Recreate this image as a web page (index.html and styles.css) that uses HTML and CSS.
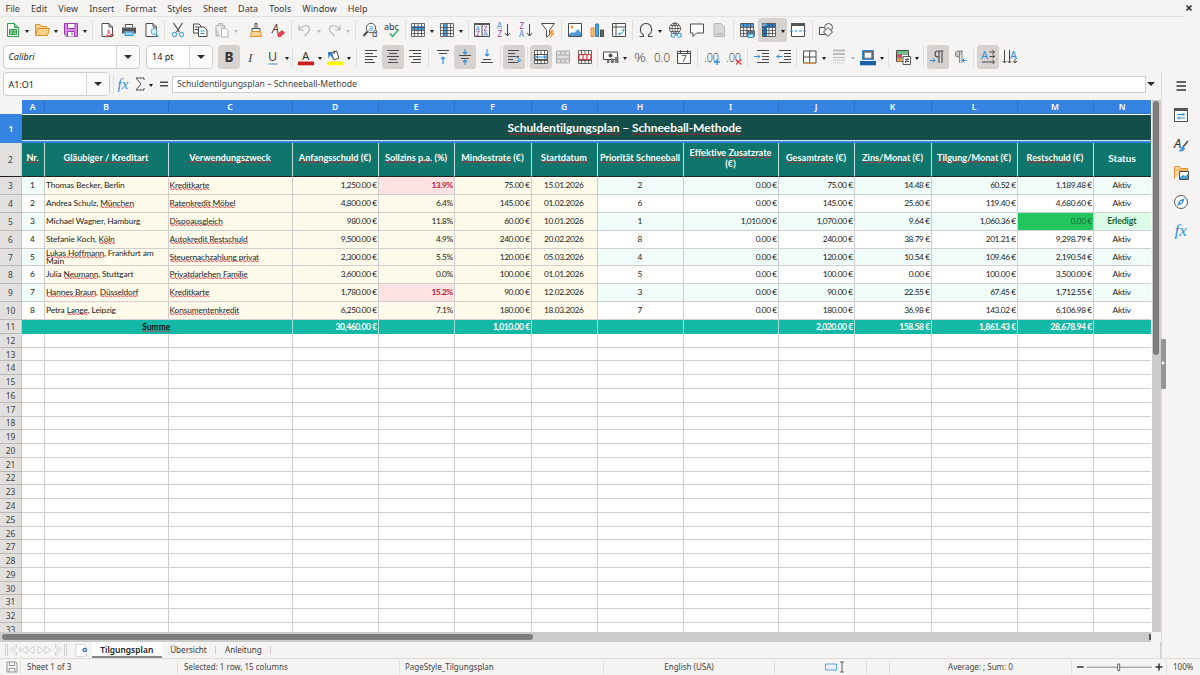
FILE: index.html
```html
<!DOCTYPE html>
<html lang="de">
<head>
<meta charset="utf-8">
<title>Schuldentilgungsplan</title>
<link rel="stylesheet" href="styles.css">
</head>
<body>
<div class="app">
  <nav class="menubar">
    <span>File</span><span>Edit</span><span>View</span><span>Insert</span><span>Format</span><span>Styles</span><span>Sheet</span><span>Data</span><span>Tools</span><span>Window</span><span>Help</span>
    <svg class="close" viewBox="0 0 8 8"><path d="M1.5 1.5l5 5M6.5 1.5l-5 5" stroke="#2e2e2e" stroke-width="1.7"/></svg>
  </nav>
  <div class="toolbar standard" id="standard"></div>
  <div class="toolbar formatting">
    <div class="combo font"><i>Calibri</i><b></b></div>
    <div class="combo size"><span>14 pt</span><b></b></div>
    <div class="toolbar" id="formatting"></div>
  </div>
  <div class="lower">
    <main class="main">
      <div class="formulabar">
        <div class="combo name"><span>A1:O1</span><b></b></div>
        <div class="toolbar" id="formula"></div>
        <div class="input">Schuldentilgungsplan – Schneeball-Methode</div>
        <b class="drop"></b>
      </div>
      <div class="work">
        <div class="sheet" id="sheet"></div>
        <div class="vscroll"><div class="vthumb"></div></div>
      </div>
      <div class="hscroll"><div class="hthumb"></div><div class="hend"></div></div>
      <div class="tabs">
        <svg class="nav" viewBox="0 0 62 12"><g fill="#f8f8f7" stroke="#c6c5c3" stroke-width=".8"><path d="M.5.5h2v11h-2zM59.500 .5h2v11h-2zM11.500 .5l-6 5.500 6 5.500V8.500L8.500 6l3-2.500zM50.500 .5l6 5.500-6 5.500V8.500L53.500 6l-3-2.500z"/><path d="M22 2.500L16 6l6 3.500zM29 2.500L23 6l6 3.500zM33 2.500L39 6l-6 3.500zM40 2.500L46 6l-6 3.500zM15 3v6"/></g></svg>
        <svg class="addtab" viewBox="0 0 14 14"><path d="M1 .5h8l3 3v10H1z" fill="#fff" stroke="#c8c6c4" stroke-width=".7"/><circle cx="10.500" cy="6.500" r="2.500" fill="#2d62ad"/><path d="M10.500 5v3M9 6.500h3" stroke="#fff" stroke-width=".8"/></svg>
        <span class="tab on">Tilgungsplan</span><span class="tab">Übersicht</span><span class="tab">Anleitung</span>
      </div>
    </main>
    <aside class="sidebar">
      <div id="side"></div>
      <div class="handle"></div>
    </aside>
  </div>
  <footer class="status">
    <span class="s-save"><svg viewBox="0 0 12 12"><g fill="none" stroke="#8a8a88" stroke-width=".9"><path d="M1 1h9l1 1v9H1zM3.500 1v3.500h5V1M3 11V7.500h6V11"/></g></svg></span>
    <span class="s-sheet">Sheet 1 of 3</span>
    <span class="s-sel">Selected: 1 row, 15 columns</span>
    <span class="s-page">PageStyle_Tilgungsplan</span>
    <span class="s-lang">English (USA)</span>
    <span class="s-mode"><svg viewBox="0 0 20 12"><path d="M1.500 3h11v6h-11z" fill="#eaf3fb" stroke="#4a9ad4" stroke-width=".9"/><path d="M16 1h4M18 1v10M16 11h4" stroke="#555" stroke-width=".9"/></svg></span>
    <span class="s-sig"></span>
    <span class="s-sum">Average: ; Sum: 0</span>
    <span class="s-zoom"><svg viewBox="0 0 86 12"><path d="M0 6h6.500M78.500 6h7M82 2.500v7" stroke="#333" stroke-width="1.500"/><path d="M10 6.200h65" stroke="#8b8b8a"/><path d="M40.700 3h2v6.500h-2z" fill="#fff" stroke="#555" stroke-width=".9"/></svg></span>
    <span class="s-pct">100%</span>
  </footer>
</div>
<script src="app.js"></script>
</body>
</html>
```
FILE: styles.css
```css
* { box-sizing: border-box; }
body { margin: 0; font-family: "Noto Sans", sans-serif; color: #3a3a3a; background: #f5f4f3; overflow: hidden; }
.app { width: 1200px; height: 675px; display: flex; flex-direction: column; overflow: hidden; }
svg { display: block; }

.menubar { height: 17px; display: flex; gap: 11.100px; padding-left: 5.500px; font-size: 9.050px; line-height: 17px; margin-right: 16px; border-bottom: 1px solid #e4e2e0; flex: none; }
.close { width: 8px; height: 8px; margin: 4px -9px 0 auto; }

.toolbar { display: flex; align-items: center; flex: none; }
.standard { height: 27px; padding: 0 0 1px 2px; }
.formatting { height: 27px; padding: 0 0 2px 2.500px; }
.btn { height: 24px; display: flex; align-items: center; border-radius: 3px; }
.btn.on { background: #d5d2cf; }
.btn svg { width: 16px; height: 16px; margin: 0 3px; overflow: visible; }
.arr { width: 7px; height: 24px; display: flex; align-items: center; }
.arr::after { content: ""; border: 2.500px solid transparent; border-top: 3px solid #1c1c1c; border-bottom: 0; margin: 3px 0 0 1px; }
.arr.off::after { border-top-color: #bbb; }
.sep { height: 20px; display: flex; justify-content: center; }
.sep::after { content: ""; width: 1px; background: #e2e0de; }
.gap::after { display: none; }
#formula .btn svg { margin: 0; }

.combo { height: 24px; border: 1px solid #cfccc9; border-radius: 4px; background: #fff; display: flex; align-items: center; justify-content: space-between; font-size: 9px; padding-left: 5px; color: #222; flex: none; }
.combo b { width: 23px; height: 22px; border-left: 1px solid #d8d5d2; background: #fafafa; border-radius: 0 3px 3px 0; display: flex; align-items: center; justify-content: center; }
.combo b::after, .drop::after { content: ""; border: 4px solid transparent; border-top: 4.500px solid #2e2e2e; border-bottom: 0; }
.font { width: 137px; }
.size { width: 66.500px; margin: 0 5px 0 6.500px; }
.name { width: 107.500px; margin-left: 2.500px; }

.lower { flex: 1; display: flex; min-height: 0; }
.main { width: 1161px; display: flex; flex-direction: column; }
.formulabar { height: 29px; display: flex; align-items: center; padding-bottom: 3px; flex: none; }
.input { width: 973.500px; height: 17px; background: #fff; border: 1px solid #d0cecc; font-size: 8.650px; line-height: 15px; padding-left: 4px; color: #444; flex: none; }
.drop { margin-left: 1.500px; display: flex; }
.work { display: flex; height: 532px; flex: none; }
.sheet { width: 1151px; overflow: hidden; background: #fff; flex: none; }
.vscroll { flex: 1; background: #cdcdcc; border-left: 1px solid #fff; padding: 1px 2px 1px 1px; }
.vthumb { width: 6px; height: 254px; border-radius: 3px; background: #7d7d7c; }
.hscroll { height: 10px; width: 1151px; background: #cbcbca; padding: 2px 0 0 2px; display: flex; justify-content: space-between; flex: none; }
.hthumb { width: 531px; height: 6px; border-radius: 3px; background: #7d7d7c; }
.hend { width: 2px; height: 6px; background: #555; }

.row { display: grid; grid-template-columns: 22px 23px 124px 124px 86px 76px 77px 66px 86px 95px 76px 77px 86px 76px 58px; }
.cell { border-right: 1px solid #cfcfcf; border-bottom: 1px solid #cfcfcf; display: flex; align-items: center; font-family: Lato, sans-serif; font-size: 8.350px; line-height: 8px; letter-spacing: -.13px; color: #1c1c1c; white-space: nowrap; overflow: hidden; padding: 0 1px 1px .5px; }
.num { justify-content: flex-end; letter-spacing: -.38px; padding-right: 1.200px; }
.mid { justify-content: center; text-align: center; padding-right: 2px; }
.date { letter-spacing: -.32px; }
.wrap { white-space: normal; padding-left: 1px; }
.head { background: #e2e0df; border-right: 1px solid #c9c7c5; border-bottom: 1px solid #bcbab8; display: flex; align-items: center; justify-content: center; font-size: 8.500px; color: #444; }
.cols { height: 14px; }
.cols .head { background: #3584e4; color: #fff; font-weight: 600; font-size: 8.500px; border-color: #2f73c9; padding-right: 1px; }
.cols .corner { background: #f5f4f3; border: 0; }
.title { height: 29px; grid-template-columns: 22px 1129px; }
.title .head { background: #3584e4; color: #fff; font-weight: 600; border: 0; }
.title .cell { background: #134e4a; color: #fff; font: 700 12.050px Lato, sans-serif; letter-spacing: -.1px; justify-content: center; padding: 0 0 2px 76px; margin-top: 1px; border: 0; border-bottom: 2px solid #3584e4; box-shadow: inset 0 -1px #dfeaf5; }
.labels { height: 34px; }
.labels > * { border-bottom: 1px solid #222; }
.labels .cell { background: #0f766e; color: #fff; font-weight: 700; font-size: 9.150px; line-height: 10.500px; letter-spacing: .02px; border-right-color: #c5dedb; padding: 0 1px 2px 0; }
.labels .cell:last-child { font-size: 9.900px; }
.data { height: 17.900px; }
.odd .cell { background: #f0fdfa; }
.data .in { background: #fffbeb; }
.data .warn { background: #fee2e2; color: #b91c3c; font-weight: 700; }
.data .paid { background: #22c55e; color: #166534; }
.data .done { background: #dcfce7; color: #166534; font-weight: 700; font-size: 8.800px; }
.total { height: 13.800px; grid-template-columns: 22px 271px 86px 76px 77px 66px 86px 95px 76px 77px 86px 76px 58px; }
.total .cell { background: #14b8a6; color: #fff; font-weight: 700; font-size: 8.500px; border-color: #9fe0d8; border-bottom: 0; }
.total .mid { color: #111; letter-spacing: 0; }
.empty { height: 13.770px; }
.sp { background: url("data:image/svg+xml,%3Csvg xmlns='http://www.w3.org/2000/svg' width='4' height='2'%3E%3Cpath d='M0 1.600L1 .5L3 1.600L4 .9' fill='none' stroke='%23e01b24' stroke-width='.8'/%3E%3C/svg%3E") 0 100% / 4px 2px repeat-x; }

.tabs { flex: 1; display: flex; align-items: center; border-bottom: 1px solid #d0cecc; border-right: 1px solid #d0cecc; font-size: 8.100px; }
.nav { width: 62px; height: 12px; margin-left: 5px; }
.addtab { width: 13px; height: 13px; margin: 0 4.500px 0 7.500px; }
.tab { height: 16px; line-height: 15px; padding: 0 9.500px 0 8.700px; position: relative; }
.tab.on { width: 69.500px; padding: 0; text-align: center; background: #fff; font-weight: 600; color: #222; border-bottom: 2px solid #888; font-size: 8.450px; }
.tab:not(.on)::after { content: ""; position: absolute; right: 0; top: 4px; height: 8px; border-right: 1px solid #d0cecc; }

.sidebar { flex: 1; position: relative; border-left: 1px solid #dcdad8; }
#side { display: flex; flex-direction: column; align-items: center; gap: 13.100px; padding: 7px 0 0; }
#side svg { width: 16px; height: 16px; }
.handle { position: absolute; left: -1px; top: 268px; width: 5px; height: 50px; background: #949493; }
.handle::after { content: ""; position: absolute; left: 1px; top: 22px; border: 2.500px solid transparent; border-left: 3px solid #fff; border-right: 0; }

.status { height: 17px; flex: none; display: flex; align-items: center; font-size: 8px; color: #444; border-top: 1px solid #dddbd9; }
.status span { height: 14px; line-height: 13px; border-right: 1px solid #e1dfdd; }
.s-save { width: 21px; padding: 1px 0 0 6px; }
.s-save svg { width: 12px; height: 12px; }
.s-sheet { width: 157px; padding-left: 6px; }
.s-sel { width: 222px; padding-left: 6px; }
.s-page { width: 204px; padding-left: 5px; }
.s-lang { width: 171px; text-align: center; }
.s-mode { width: 92px; padding: 1px 0 0 49px; }
.s-mode svg { width: 20px; height: 12px; }
.s-sig { width: 23px; }
.s-sum { width: 182px; text-align: center; }
.s-zoom { width: 95px; padding: 1px 0 0 5px; }
.s-zoom svg { width: 86px; height: 12px; }
.status .s-pct { padding-left: 6px; border: 0; }
```
FILE: app.js
```js
const K = '#4a4a4a', B = '#2f8fd8', G = '#bcbab8';
const p = (d, stroke = K, fill = 'none', w = 1) => `<path d="${d}" stroke="${stroke}" fill="${fill}" stroke-width="${w}"/>`;
const t = (s, x, y, size, color = K, extra = '') => `<text x="${x}" y="${y}" font-size="${size}" fill="${color}" ${extra}>${s}</text>`;
const page = p('M3 1.500h7l3.500 3.500v9.500H3zM10 1.500V5h3.500', K, '#fff');
const grid = p('M1.500 1.500h13v13h-13zM1.500 5.500h13M1.500 8.500h13M1.500 11.500h13M4.500 1.500v13M8 1.500v13M11.500 1.500v13', K, 'none', .8);
const lines = (a, c = K) => a.map(([x1, x2, y]) => p(`M${x1} ${y}H${x2}`, c)).join('');
const pilcrow = 'M12 14V2.500M9 14V2.500M13.500 2H8a3 3 0 0 0 0 6h1';

const icons = {
  fresh: p('M2.500 1.500h7l4 4v9h-11z', '#2f9e4f', '#fff') + p('M9.500 1.500v4h4', '#2f9e4f', '#8fd19e') + p('M4.500 7.500h7v5h-7zM4.500 10h7M8 7.500v5', '#2f9e4f', '#9bd8a8'),
  open: p('M1.500 13V2.500h4.500l1.500 2h5V7', '#e08b2c', '#fbd28e') + p('M1.500 13.500l2-7H15.500l-2 7z', '#e08b2c', '#fbcf86'),
  save: p('M1.500 1.500h13v13h-11l-2-2z', '#9c3bb0', '#d48be0') + p('M4.500 1.500h7.500v5H4.500z', '#9c3bb0', '#fff') + p('M4.500 14.500v-5h7v5M9 10.500v3', '#9c3bb0', '#fff'),
  pdf: page + p('M6 15c3-2 5-6 3.500-7-1.500 0 0 4 5.500 5.500-2-1-5 0-9 1.500z', '#e0434f', 'none'),
  print: p('M4.500 5V2.500h7V5', K, '#fff') + '<path d="M1 5.500h14v6h-2.500v-2h-9v2H1z" fill="#555"/>' + p('M4 10h8v3.500H4z', B, '#a9d3f2'),
  preview: page + '<circle cx="11" cy="9.500" r="3" fill="#dceefa" stroke="#4ba3dd"/>' + p('M13 12l2.500 3', '#4ba3dd', 'none', 1.300),
  cut: p('M3.500 1l6 9M12.500 1l-6 9', K, 'none', 1.200) + `<circle cx="4.500" cy="12.500" r="2.200" fill="none" stroke="${B}"/><circle cx="11.500" cy="12.500" r="2.200" fill="none" stroke="${B}"/>`,
  copy: p('M1.500 2h5.500l2 2v7H1.500zM3 5h3M3 7.500h3', K, '#fff') + p('M6.500 5h5.500l3 3v6.500H6.500z', K, '#fff') + p('M8.500 9h4M8.500 11.500h4', B),
  paste: p('M2 3.500h2.500v-2h4v2H11V7M2 3.500V14h4', '#b5b3b1', '#d5d3d1') + p('M7.500 6.500h4l2.500 2.500v6H7.500z', '#b5b3b1', '#fff'),
  clone: p('M7 1.500h2v5H7zM4 6.500h8v3H4z', K, '#fff') + p('M3.500 9.500h9l1 5H2.500z', '#e69138', '#fbd28e'),
  clear: t('A', 2, 11, 12, K, 'font-style="italic"') + '<path d="M7 12l5-4 3 3-4.500 4H8z" fill="#e0434f"/>',
  undo: p('M2 3v5h5M2.500 8c2-5 10-6 10-1 0 3-3 5-5 7', G, 'none', 1.200),
  redo: p('M14 3v5H9M13.500 8c-2-5-10-6-10-1 0 3 3 5 5 7', G, 'none', 1.200),
  find: '<circle cx="9" cy="6" r="4.700" fill="#fff" stroke="#555"/>' + t('a', 6.500, 9, 8, B) + t('d', 10, 15, 9) + p('M5.500 9.500L1.500 14', K, 'none', 2),
  spell: t('abc', 0, 8, 9, '#333') + p('M6 11.500l2.500 3 6-7', '#38b070', 'none', 1.500),
  rows: '<path d="M2 4h12v4H2z" fill="#4ba3e3"/>' + grid,
  cols: '<path d="M4.500 2h4v12h-4z" fill="#4ba3e3"/>' + grid,
  sort: p('M.5 1.500h15v13H.5zM8 1.500v13', K) + '<path d="M0 1h16v2H0z" fill="#555"/>' + t('A', 1.700, 8.700, 6.500, B) + t('Z', 1.900, 14, 6.500, '#a040b8') + t('Z', 9.600, 8.700, 6.500, '#a040b8') + t('A', 9.500, 14, 6.500, B),
  asc: t('A', 1, 7, 8, B) + t('Z', 1.500, 15, 8, '#a040b8') + p('M11.500 2v12M9 11l2.500 3 2.500-3', K),
  desc: t('Z', 1.500, 7, 8, '#a040b8') + t('A', 1, 15, 8, B) + p('M11.500 2v12M9 11l2.500 3 2.500-3', K),
  filter: p('M1.500 1.500h13L9.500 8v5L6.500 15V8z', K, '#fff') + '<path d="M11 8h3l-1.500 3H15l-5 5 1-4H9z" fill="#f39c3c"/>',
  image: p('M1.500 1.500h13v13h-13z', K, '#fff') + '<path d="M2 14v-2l3-2 2 1 4-4 3 4v3z" fill="#4b9cd8"/><circle cx="5" cy="5" r="1.500" fill="#f39c3c"/>',
  chart: p('M2 6h3v8.500H2z', '#e69138', '#f9c06c') + p('M6.500 2h3v12.500h-3z', '#2f7fc4', '#4ba3e3') + p('M11.500 8h3v6.500h-3z', K, '#666'),
  pivot: p('M1.500 1.500h13v13h-13zM1.500 5h13M5 1.500v13', K, '#fff') + p('M7.500 12c4 0 5-2 5-5M11 8.500L12.500 7 14 8.500M9 10.500L7.500 12 9 13.500', B),
  omega: p('M1.500 14.500h4v-1.500C0 9 2.500 1.500 8 1.500S16 9 10.500 13v1.500h4', K, 'none', 1.100),
  link: '<circle cx="8" cy="6.500" r="5.500" fill="#fff" stroke="#555"/>' + p('M2.500 6.500h11M8 1v11M4 3.500h8M4 9.500h8M8 1C4 4 4 9 8 12M8 1c4 3 4 8 0 11', K, 'none', .8) + p('M7 11.500H5.500a1.800 1.800 0 0 0 0 3.500H8M10.500 15H13a1.800 1.800 0 0 0 0-3.500h-2.500M7.500 13.200h3.500', B, '#fff', 1.200),
  comment: p('M1.500 2h13v9H7.500L4 14.500V11H1.500z', K, '#fff'),
  header: p('M3 1.500h7l3.500 3.500v9.500H3z', '#b8b6b4', '#d9d7d5') + p('M5 12h6.500', '#aaa'),
  parea: '<path d="M2 1h12v4H2z" fill="#4b9ad8"/>' + grid + '<path d="M7.500 8.500h8.500v6H7.500z" fill="#5d6e7d"/>' + p('M9 12h5.500v3.500H9z', B, '#bfe0f7'),
  freeze: '<path d="M2 2h12.500v12.500H2z" fill="#fff"/><path d="M1.500 1.500h13v3.500h-8.500v9.500H1.500z" fill="#1e78c8"/>' + grid + p('M3.500 0v4M1 3h5', '#9fd0f5', 'none', .8),
  split: p('M1.500 2.500h13v12h-13z', K, '#fff') + '<path d="M1 1h14v3H1z" fill="#555"/>' + p('M0 9h3M4.500 9h3M9 9h3M13.500 9h2.500', B, 'none', 1.200),
  shapes: p('M1.500 5.500h8v7h-8z', K, '#f5f4f3') + '<circle cx="10.500" cy="5.500" r="4" fill="#f5f4f3" stroke="#555"/>' + p('M10 5.500l4.500 4.500-4.500 4.500L5.500 10z', K, '#f5f4f3'),

  bold: t('B', 3.500, 13, 13.500, '#333', 'font-weight="700"'),
  italic: t('I', 5, 13, 13.500, K, 'font-style="italic" font-family="Liberation Serif"'),
  underline: t('U', 3, 12, 12.500) + p('M3.500 15h9', '#3f8fd8', 'none', 1),
  color: t('A', 4, 10.500, 11.500, '#333') + '<path d="M0 12.500h16v3.800H0z" fill="#c9211e"/>',
  fill: p('M4.500 4l5-2 2.500 7-5 2zM7 5V1.500', K, '#fff') + '<path d="M1 3h4l1 7-3-4-1.500 4z" fill="#2f7fc4"/><path d="M0 12.500h16v3.800H0z" fill="#ffff00"/>',
  left: lines([[2, 14, 1.500], [2, 10, 4.500], [2, 14, 7.500], [2, 10, 10.500], [2, 12, 13.500]]),
  center: lines([[2, 14, 1.500], [4, 12, 4.500], [2, 14, 7.500], [4, 12, 10.500], [3, 13, 13.500]]),
  right: lines([[2, 14, 1.500], [6, 14, 4.500], [2, 14, 7.500], [6, 14, 10.500], [4, 14, 13.500]]),
  top: lines([[2, 14, 1.500], [4, 12, 4.500]]) + p('M8 15V8M6 10l2-2 2 2', B, 'none', 1.100),
  middle: lines([[2, 14, 6.500], [4, 12, 9.500]]) + p('M8 0v4.500M6 3l2 2 2-2M8 16v-4.500M6 13l2-2 2 2', B, 'none', 1.100),
  bottom: lines([[2, 14, 13.500], [4, 12, 10.500]]) + p('M8 0v7M6 5l2 2 2-2', B, 'none', 1.100),
  wrap: lines([[2, 13, 1.500], [2, 9, 4.500], [2, 13, 7.500], [2, 7, 10.500], [2, 12, 13.500]]) + p('M9 7.500c3 0 4 2 4 5M11 11l2 2 2-2', B),
  mergec: '<path d="M2 2h12v12H2z" fill="#fff"/>' + grid + p('M2 5.500h12v5H2z', K, '#fff') + p('M3 8h10M5 6.500L3.500 8 5 9.500M11 6.500L12.500 8 11 9.500', B, 'none', 1.200),
  merge: p('M1.500 2h13v12h-13zM1.500 6h13M1.500 10h13M6 2v4M10 2v4M6 10v4M10 10v4', '#aaa', '#ddd'),
  unmerge: grid + p('M2 5.500h12v5H2zM6 5.500v5M10 5.500v5', '#d9363e', '#fff', 1.200),
  currency: p('M.5 3h14v7.500H.5z', K, '#fff') + '<circle cx="7.500" cy="6.500" r="2" fill="#555"/><path d="M4 11h2.500v3H4zM8 9.500h3V14H8zM12 8h3.500v6H12z" fill="#777"/>',
  percent: t('%', 2, 13, 13, K, 'textLength="12" lengthAdjust="spacingAndGlyphs" font-weight="300"'),
  number: t('0.0', 0, 13, 13.500, K, 'textLength="16" lengthAdjust="spacingAndGlyphs" font-weight="300"'),
  date: p('M1.500 2.500h13v12h-13zM1.500 4.500h13M4.500 1v3M11.500 1v3', K, '#fff') + t('7', 5.500, 13, 9),
  adddec: t('.00', 0, 13, 13, K, 'textLength="15" lengthAdjust="spacingAndGlyphs" font-weight="300"') + p('M13 10v6M10 13h6', B, 'none', 1.300),
  deldec: t('.00', 0, 13, 13, K, 'textLength="15" lengthAdjust="spacingAndGlyphs" font-weight="300"') + p('M10 10.500l5.500 5M15.500 10.500l-5.500 5', '#e0434f', 'none', 1.300),
  indent: lines([[3, 15, 1.500], [8, 15, 4.500], [8, 15, 7.500], [8, 15, 10.500], [3, 15, 13.500]]) + p('M0 7.500h6M4 5.500l2 2-2 2', B),
  outdent: lines([[3, 15, 1.500], [8, 15, 4.500], [8, 15, 7.500], [8, 15, 10.500], [3, 15, 13.500]]) + p('M6.500 7.500h-6M3 5.500l-2 2 2 2', B),
  borders: p('M1.500 2h12.500v12H1.500zM7.700 2v12M1.500 8H14', K, '#fff') + p('M1.500 14.200H14', '#e69138'),
  bstyle: p('M2 1.500h12M2 5h12', '#bbb', 'none', 2) + p('M2 8.500h12', '#bbb', 'none', 1) + p('M2 11h3M6 11h3M10 11h4M2 14h1M4 14h1M6 14h1M8 14h1M10 14h1M12 14h1', '#bbb'),
  bcolor: p('M2.500 1.500h11v9h-11z', B, '#5a6670') + p('M4.500 3.500h7v5.500h-7z', '#999', '#fff') + '<path d="M0 12h16v4.300H0z" fill="#1b5fa5"/>',
  cond: p('M1.500 1.500h12v11h-12zM1.500 5h12M1.500 9h12M5 1.500v11', K, '#fff') + '<path d="M2 2h11v3H2z" fill="#69c488"/><path d="M2 5.500h5v3H2z" fill="#e0434f"/><path d="M2 9.500h5v3H2z" fill="#f39c3c"/>' + p('M8 7.500h7.500V15.500H8zM10 10.500h4M10 12.500h4M13 9l-2.500 5', K, '#fff', .9),
  ltr: p(pilcrow, K, 'none', 1.100) + p('M0 11.500h5M3 9.500l2 2-2 2', B),
  rtl: p('M10 14V2.500M7.500 14V2.500M11 2H6.500a3 3 0 0 0 0 6h1', '#888', '#ccc', 1.100) + p('M15 11.500h-4.500M12.500 9.500l-2 2 2 2', B),
  horiz: t('A', 1, 9.500, 11, B) + p('M9.500 3h5M9.500 7.500h5M2 13h12.500M12.500 1l2 2-2 2M12.500 5.500l2 2-2 2M12.500 11l2 2-2 2', K),
  vert: t('A', 8, 9.500, 11, B) + p('M2.500 1v13M7.500 1v13M13 9.500V14M.5 12l2 2 2-2M5.500 12l2 2 2-2M11 12l2 2 2-2', K),

  fx: t('fx', 1.500, 13, 15, B, 'font-style="italic" font-family="Liberation Serif"'),
  sigma: p('M12 4V2H4l5 6-5 6h8v-2', K),
  equal: p('M4 6.200h8M4 9.800h8', K, 'none', 1.600),
  burger: p('M3.500 4h9.500M3.500 8h9.500M3.500 12h9.500', '#333', 'none', 1.500),
  props: p('M1.500 1.500h13v13h-13z', K, '#fff') + '<path d="M1 1h14v3H1z" fill="#555"/>' + p('M4 7.500h8M4 11h8', B) + p('M10 6v3M6 9.500v3', B),
  styles: t('A', 1, 11.500, 13, '#333', 'font-style="italic"') + p('M15 5l-5 6', K, 'none', 1.500) + '<path d="M5 15c3 0 2-4 5-4.500l2 2C11 15 8 16 5 15z" fill="#3f93d6"/>',
  gallery: p('M1.500 13V1.500h5l1 2h7V6M1.500 13.500V5h14', '#e69138', '#fbd9a4') + p('M6.500 6.500h9v8h-9z', K, '#fff') + '<path d="M7 14v-2l3-2 2 1 3-2v5z" fill="#4b9cd8"/>',
  navig: '<circle cx="8" cy="8" r="6.500" fill="#fff" stroke="#555"/><path d="M12 4l-2.500 5.500L4 12l2.500-5.500z" fill="#2f8fd8"/><circle cx="8" cy="8" r="1" fill="#fff"/>',
  functions: t('fx', 1.500, 13, 17, B, 'font-style="italic" font-family="Liberation Serif"')
};

const svg = n => `<svg viewBox="0 0 16 16">${icons[n]}</svg>`;

// Item syntax: "name", suffix "*" = pressed, "v" after a colon = with dropdown ("x" = disabled), a number = separator width, "g5" = gap.
function bar(id, spec) {
  document.getElementById(id).innerHTML = spec.split(' ').map(s => {
    if (/^\d/.test(s)) return `<div class="sep" style="width:${s}px"></div>`;
    if (/^g\d/.test(s)) return `<div class="sep gap" style="width:${s.slice(1)}px"></div>`;
    const [n, d] = s.split(':');
    return `<div class="btn${n.endsWith('*') ? ' on' : ''}">${svg(n.replace('*', ''))}${d ? `<i class="arr${d === 'x' ? ' off' : ''}"></i>` : ''}</div>`;
  }).join('');
}
bar('standard', 'fresh:v open:v save:v 7 pdf print preview 5 cut copy paste:x g5 clone clear 5 undo:x redo:x 7 find spell 4 rows:v cols:v 6 sort asc desc filter 5 image chart pivot 5 omega:v link comment header 6 parea freeze*:v split 6 shapes');
bar('formatting', 'bold* italic underline:v 4 color:v fill:v 7 left center* right 6 top middle* bottom 5 wrap* 5 mergec* merge unmerge 4 currency:v percent number date 6 adddec deldec 6 indent outdent 4 borders:v bstyle:x bcolor:v 6 cond:v 6 ltr* rtl 6 horiz* vert');
bar('formula', '6 fx sigma:v g1 equal');
document.getElementById('side').innerHTML = ['burger', 'props', 'styles', 'gallery', 'navig', 'functions'].map(svg).join('');

// Words between tildes are flagged by the spell checker.
const mark = s => s.replace(/~([^~]+)~/g, '<span class="sp">$1</span>');
const cell = (s, c = '') => `<div class="cell ${c}"><div>${mark(s)}</div></div>`;
const head = n => `<div class="head">${n}</div>`;

const labels = ['~Nr.~', '~Gläubiger / Kreditart~', '~Verwendungszweck~', '~Anfangsschuld~ (€)', '~Sollzins p.a.~ (%)', '~Mindestrate~ (€)', '~Startdatum~', '~Priorität Schneeball~', '~Effektive Zusatzrate~<br>(€)', '~Gesamtrate~ (€)', '~Zins/Monat~ (€)', '~Tilgung/Monat~ (€)', '~Restschuld~ (€)', 'Status'];
const data = [
  ['Thomas Becker, Berlin', '~Kreditkarte~', '1,250.00', '13.9', '75.00', '15.01.2026', 2, '0.00', '75.00', '14.48', '60.52', '1,189.48'],
  ['Andrea Schulz, ~München~', '~Ratenkredit Möbel~', '4,800.00', '6.4', '145.00', '01.02.2026', 6, '0.00', '145.00', '25.60', '119.40', '4,680.60'],
  ['Michael Wagner, Hamburg', '~Dispoausgleich~', '980.00', '11.8', '60.00', '10.01.2026', 1, '1,010.00', '1,070.00', '9.64', '1,060.36', '0.00'],
  ['Stefanie Koch, ~Köln~', '~Autokredit Restschuld~', '9,500.00', '4.9', '240.00', '20.02.2026', 8, '0.00', '240.00', '38.79', '201.21', '9,298.79'],
  ['~Lukas Hoffmann~, Frankfurt am Main', '~Steuernachzahlung privat~', '2,300.00', '5.5', '120.00', '05.03.2026', 4, '0.00', '120.00', '10.54', '109.46', '2,190.54'],
  ['Julia ~Neumann~, Stuttgart', '~Privatdarlehen Familie~', '3,600.00', '0.0', '100.00', '01.01.2026', 5, '0.00', '100.00', '0.00', '100.00', '3,500.00'],
  ['~Hannes Braun~, ~Düsseldorf~', '~Kreditkarte~', '1,780.00', '15.2', '90.00', '12.02.2026', 3, '0.00', '90.00', '22.55', '67.45', '1,712.55'],
  ['Petra ~Lange~, Leipzig', '~Konsumentenkredit~', '6,250.00', '7.1', '180.00', '18.03.2026', 7, '0.00', '180.00', '36.98', '143.02', '6,106.98']
];

let h = `<div class="row cols"><div class="head corner"></div>${[...'ABCDEFGHIJKLMN'].map(head).join('')}</div>`;
h += `<div class="row title">${head(1)}${cell('~Schuldentilgungsplan~ – ~Schneeball-Methode~')}</div>`;
h += `<div class="row labels">${head(2)}${labels.map(l => cell(l, 'mid')).join('')}</div>`;
data.forEach((r, i) => {
  const paid = r[11] === '0.00';
  h += `<div class="row data ${i % 2 ? '' : 'odd'}">${head(i + 3)}` + cell(String(i + 1), 'mid') + cell(r[0], 'in wrap') + cell(r[1], 'in')
    + cell(r[2] + ' €', 'in num') + cell(r[3] + '%', 'in num' + (r[3] > 12 ? ' warn' : '')) + cell(r[4] + ' €', 'in num') + cell(r[5], 'in mid date') + cell(String(r[6]), 'mid')
    + [7, 8, 9, 10].map(k => cell(r[k] + ' €', 'num')).join('') + cell(r[11] + ' €', 'num' + (paid ? ' paid' : '')) + cell(paid ? 'Erledigt' : 'Aktiv', 'mid' + (paid ? ' done' : '')) + '</div>';
});
h += `<div class="row total">${head(11)}${cell('~Summe~', 'mid')}` + ['30,460.00 €', '', '1,010.00 €', '', '', '', '2,020.00 €', '158.58 €', '1,861.43 €', '28,678.94 €', ''].map(v => cell(v, 'num')).join('') + '</div>';
for (let n = 12; n <= 33; n++) h += `<div class="row empty">${head(n)}${'<div class="cell"></div>'.repeat(14)}</div>`;
document.getElementById('sheet').innerHTML = h;
```
